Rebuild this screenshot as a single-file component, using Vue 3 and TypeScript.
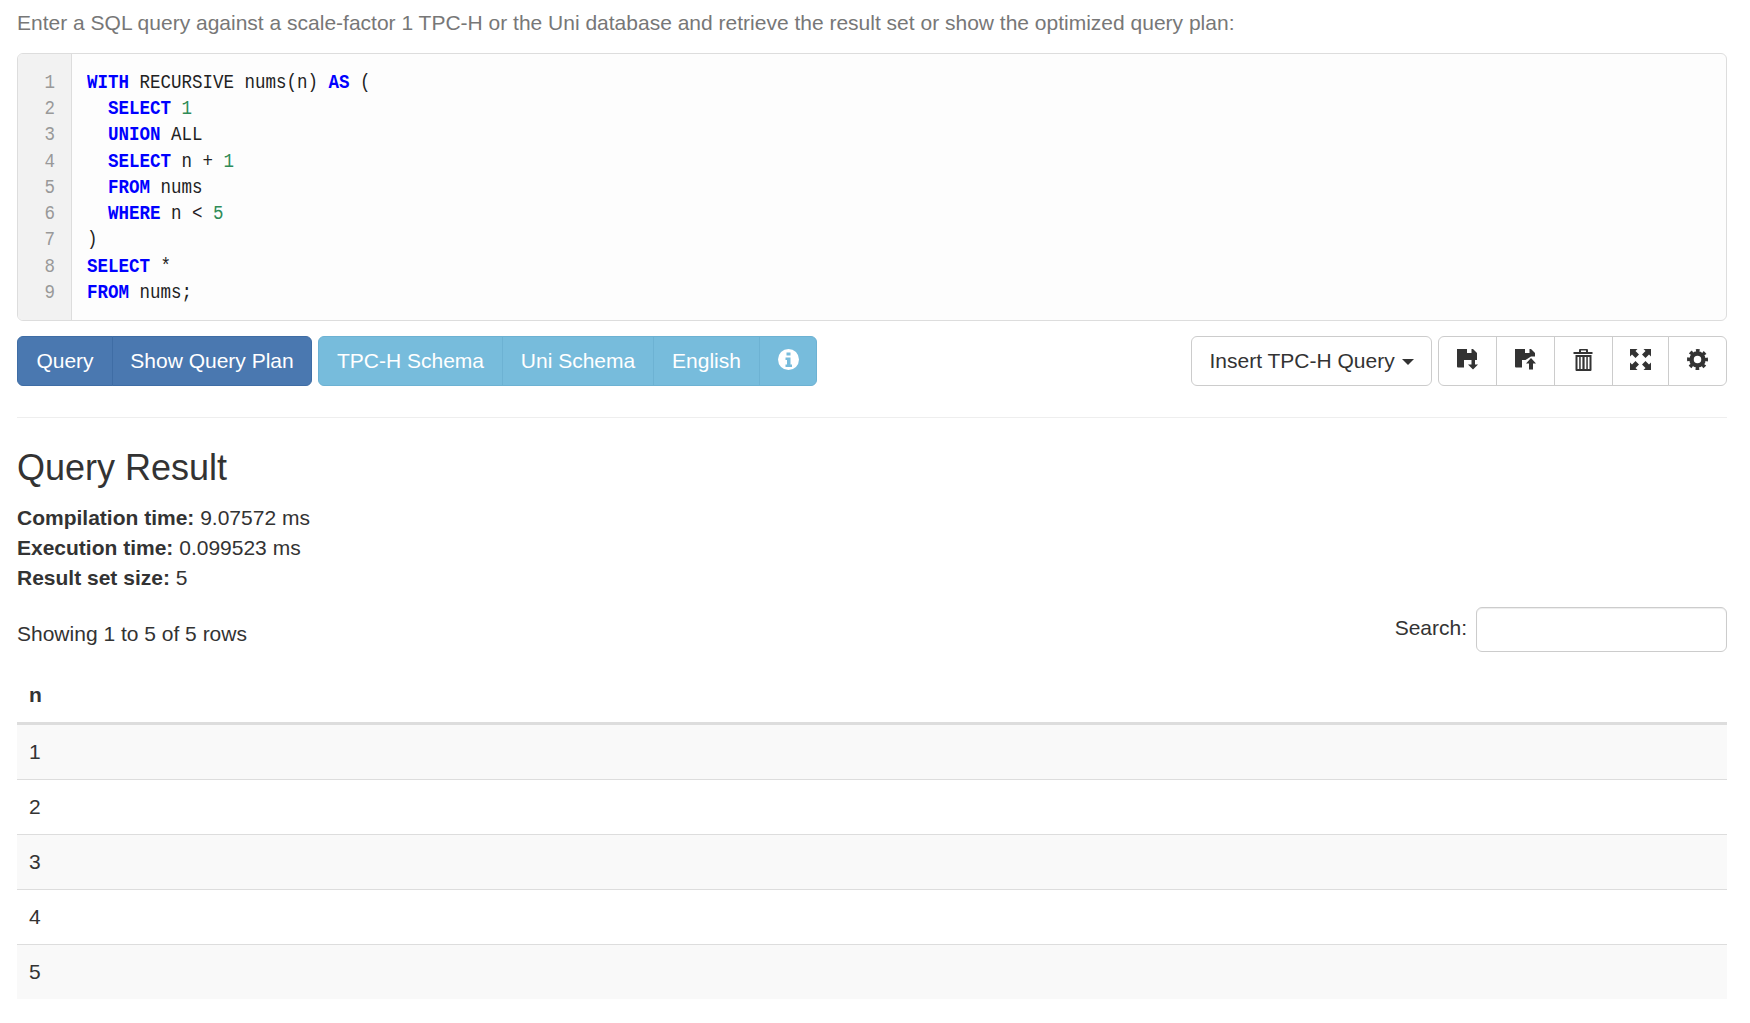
<script setup lang="ts">
interface Seg { t: string; c?: string }
const indent = '  '
const lines: Seg[][] = [
  [{ t: 'WITH', c: 'kw' }, { t: ' RECURSIVE nums(n) ' }, { t: 'AS', c: 'kw' }, { t: ' (' }],
  [{ t: indent }, { t: 'SELECT', c: 'kw' }, { t: ' ' }, { t: '1', c: 'num' }],
  [{ t: indent }, { t: 'UNION', c: 'kw' }, { t: ' ALL' }],
  [{ t: indent }, { t: 'SELECT', c: 'kw' }, { t: ' n + ' }, { t: '1', c: 'num' }],
  [{ t: indent }, { t: 'FROM', c: 'kw' }, { t: ' nums' }],
  [{ t: indent }, { t: 'WHERE', c: 'kw' }, { t: ' n < ' }, { t: '5', c: 'num' }],
  [{ t: ')' }],
  [{ t: 'SELECT', c: 'kw' }, { t: ' *' }],
  [{ t: 'FROM', c: 'kw' }, { t: ' nums;' }],
]
const rows = [1, 2, 3, 4, 5]
</script>

<template>
  <div class="page">
    <p class="intro">Enter a SQL query against a scale-factor 1 TPC-H or the Uni database and retrieve the result set or show the optimized query plan:</p>

    <div class="editor">
      <div class="gutter">
        <div class="gutter-inner">
          <div v-for="(_, i) in lines" :key="i" class="cl">{{ i + 1 }}</div>
        </div>
      </div>
      <div class="code">
        <div class="code-inner">
          <div v-for="(line, i) in lines" :key="i" class="cl"><span v-for="(s, j) in line" :key="j" :class="s.c">{{ s.t }}</span></div>
        </div>
      </div>
    </div>

    <div class="toolbar">
      <div class="group">
        <button class="btn primary w-query">Query</button>
        <button class="btn primary w-plan">Show Query Plan</button>
      </div>
      <div class="group">
        <button class="btn info w-tpch">TPC-H Schema</button>
        <button class="btn info w-uni">Uni Schema</button>
        <button class="btn info w-en">English</button>
        <button class="btn info icon-btn w-info">
          <svg class="ico" viewBox="0 0 21 21"><circle cx="10.500" cy="10.500" r="10.500" fill="#fff" /><path d="M8.500 3.500h4v3h-4zM7.500 8.500h5v7h1.500v2.500H7.500v-2.500h1.500v-4.500H7.500z" fill="#77bcdc" /></svg>
        </button>
      </div>
      <div class="spacer"></div>
      <button class="btn default w-insert">Insert TPC-H Query <span class="caret"></span></button>
      <div class="group">
        <button class="btn default icon-btn w-i1">
          <svg class="ico" viewBox="0 0 21 21"><path d="M0 0H10V4H14.500V0H16L20 4V11H7V18.500H1a1 1 0 0 1-1-1z" fill="#333" /><path d="M14.500 11h3.500v4.500h3l-5 5-5-5h3.500z" fill="#333" /></svg>
        </button>
        <button class="btn default icon-btn w-i2">
          <svg class="ico" viewBox="0 0 21 21"><path d="M0 0H10V4H14.500V0H16L20 4V7.500H16L10.500 11H7V18.500H1a1 1 0 0 1-1-1z" fill="#333" /><path d="M16 9l5 5.500h-3v6h-4v-6h-3z" fill="#333" /></svg>
        </button>
        <button class="btn default icon-btn w-i3">
          <svg class="ico" viewBox="0 0 21 21"><path d="M7 0h7a1 1 0 0 1 1 1v2h4.500v2h-19V3H6V1a1 1 0 0 1 1-1zM8 1.500V3h5V1.500zM2.500 6h16v15a1 1 0 0 1-1 1h-14a1 1 0 0 1-1-1zM4.500 8v12h1.700V8zM7.700 8v12h1.700V8zM11.600 8v12h1.700V8zM14.800 8v12h1.700V8z" fill="#333" fill-rule="evenodd" /></svg>
        </button>
        <button class="btn default icon-btn w-i4">
          <svg class="ico" viewBox="0 0 21 21"><path d="M0 0h7.500L5.500 2 9 5.500 5.500 9 2 5.500 0 7.500zM21 0v7.500L19 5.500 15.500 9 12 5.500 15.500 2 13.500 0zM0 21v-7.500L2 15.500 5.500 12 9 15.500 5.500 19 7.500 21zM21 21h-7.500L15.500 19 12 15.500 15.500 12 19 15.500 21 13.500z" fill="#333" /></svg>
        </button>
        <button class="btn default icon-btn w-i5">
          <svg class="ico" viewBox="0 0 21 21"><circle cx="10.500" cy="10.500" r="6" fill="none" stroke="#333" stroke-width="4.500" /><circle cx="10.500" cy="10.500" r="8.500" fill="none" stroke="#333" stroke-width="4" stroke-dasharray="3.338 3.338" transform="rotate(-11.250 10.500 10.500)" /></svg>
        </button>
      </div>
    </div>

    <hr class="rule" />

    <h3 class="title">Query Result</h3>
    <p class="stat"><b>Compilation time:</b> 9.07572 ms</p>
    <p class="stat"><b>Execution time:</b> 0.099523 ms</p>
    <p class="stat last"><b>Result set size:</b> 5</p>

    <div class="controls">
      <div class="info-text">Showing 1 to 5 of 5 rows</div>
      <label class="search"><span class="search-label">Search:</span><input class="search-input" type="search" /></label>
    </div>

    <table class="grid">
      <thead>
        <tr><th>n</th></tr>
      </thead>
      <tbody>
        <tr v-for="r in rows" :key="r"><td>{{ r }}</td></tr>
      </tbody>
    </table>
  </div>
</template>

<style>
body { background: #fff; }
</style>

<style scoped>
.page {
  padding: 8px 23px 0 17px;
  font-family: "Liberation Sans", Arial, sans-serif;
  font-size: 21px;
  line-height: 1.42857;
  color: #333;
}
.intro { margin: 0 0 15px; color: #777; }
.editor {
  display: flex;
  height: 268px;
  box-sizing: border-box;
  border: 1px solid #ddd;
  border-radius: 6px;
  background: #fdfdfd;
  overflow: hidden;
}
.gutter {
  width: 54px;
  flex: none;
  box-sizing: border-box;
  padding: 16px 16px 0 0;
  background: #f2f2f2;
  border-right: 1px solid #ddd;
  text-align: right;
  color: #999;
}
.code { flex: 1; padding: 16px 0 0 15px; color: #222; white-space: pre; }
.gutter-inner, .code-inner {
  font-family: "Liberation Mono", monospace;
  font-size: 21px;
  line-height: 26.25px;
  transform: scaleX(0.8333);
}
.gutter-inner { transform-origin: right top; }
.code-inner { transform-origin: left top; }
.cl { height: 26.25px; }
.kw { color: #00f; font-weight: 700; }
.num { color: #2e8b57; }
.toolbar { display: flex; gap: 6px; margin-top: 15px; }
.spacer { flex: 1; }
.group { display: flex; }
.btn {
  box-sizing: border-box;
  height: 50px;
  padding: 9px 0;
  border: 1px solid transparent;
  border-radius: 6px;
  font: inherit;
  line-height: 30px;
  white-space: nowrap;
  text-align: center;
  background: #fff;
  color: #333;
}
.w-query { width: 96px; }
.w-plan { width: 200px; }
.w-tpch { width: 185px; }
.w-uni { width: 152px; }
.w-en { width: 107px; }
.w-info { width: 58px; }
.w-insert { width: 241px; }
.w-i1 { width: 59px; }
.w-i2 { width: 58.5px; }
.w-i3 { width: 59px; }
.w-i4 { width: 57.5px; }
.w-i5 { width: 59px; }
.group .btn { border-radius: 0; margin-left: -1px; }
.group .btn:first-child { border-radius: 6px 0 0 6px; margin-left: 0; }
.group .btn:last-child { border-radius: 0 6px 6px 0; }
.primary { background: #4a78b0; border-color: #3f6da5; color: #fff; }
.info { background: #77bcdc; border-color: #6db2d3; color: #fff; }
.default { border-color: #ccc; }
.icon-btn { padding: 0; display: flex; align-items: center; justify-content: center; }
.ico { width: 21px; height: 21px; display: block; overflow: visible; margin-bottom: 3px; }
.caret {
  display: inline-block;
  width: 0;
  height: 0;
  margin-left: 1px;
  vertical-align: middle;
  border-top: 6px solid #333;
  border-left: 6px solid transparent;
  border-right: 6px solid transparent;
}
.rule { margin: 31px 0 0; border: 0; border-top: 1px solid #eee; }
.title { margin: 30px 0 15px; font-size: 36px; font-weight: 500; line-height: 1.1; color: #333; }
.stat { margin: 0; }
.stat.last { margin-bottom: 14.5px; }
.controls { display: flex; justify-content: space-between; align-items: flex-start; }
.info-text { padding-top: 12px; }
.search { display: flex; align-items: center; }
.search-label { margin-right: 9px; margin-bottom: 3px; }
.search-input {
  box-sizing: border-box;
  width: 251px;
  height: 45px;
  border: 1px solid #ccc;
  border-radius: 6px;
  background: #fff;
  box-shadow: inset 0 1px 1px rgba(0, 0, 0, 0.075);
  outline: 0;
}
.grid { width: 100%; margin-top: 16px; border-collapse: separate; border-spacing: 0; }
th, td { padding: 12px; text-align: left; }
th { border-bottom: 3px solid #ddd; font-weight: 700; }
td { border-top: 1px solid #ddd; }
tbody tr:first-child td { border-top: 0; }
tbody tr:nth-child(odd) td { background: #f9f9f9; }
</style>
